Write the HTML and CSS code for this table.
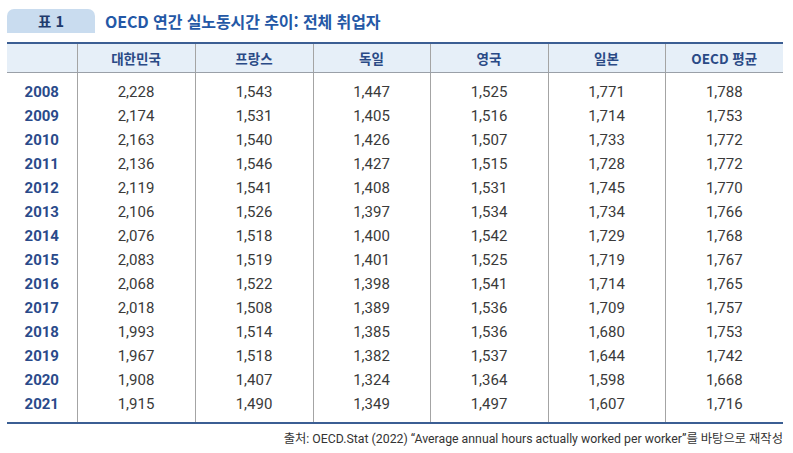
FILE: index.html
```html
<!DOCTYPE html>
<html lang="ko">
<head>
<meta charset="utf-8">
<title>표 1</title>
<link rel="stylesheet" href="styles.css">
</head>
<body>
<div class="page">
  <div class="caption">
    <div class="tab">표 1</div>
    <div class="title">OECD 연간 실노동시간 추이: 전체 취업자</div>
  </div>
  <table class="data">
    <colgroup>
      <col class="c-year"><col class="c-a"><col class="c-a"><col class="c-b"><col class="c-a"><col class="c-b"><col class="c-a">
    </colgroup>
    <thead>
      <tr><th></th><th>대한민국</th><th>프랑스</th><th>독일</th><th>영국</th><th>일본</th><th>OECD 평균</th></tr>
    </thead>
    <tbody>
      <tr class="first"><td class="yr">2008</td><td>2,228</td><td>1,543</td><td>1,447</td><td>1,525</td><td>1,771</td><td>1,788</td></tr>
      <tr><td class="yr">2009</td><td>2,174</td><td>1,531</td><td>1,405</td><td>1,516</td><td>1,714</td><td>1,753</td></tr>
      <tr><td class="yr">2010</td><td>2,163</td><td>1,540</td><td>1,426</td><td>1,507</td><td>1,733</td><td>1,772</td></tr>
      <tr><td class="yr">2011</td><td>2,136</td><td>1,546</td><td>1,427</td><td>1,515</td><td>1,728</td><td>1,772</td></tr>
      <tr><td class="yr">2012</td><td>2,119</td><td>1,541</td><td>1,408</td><td>1,531</td><td>1,745</td><td>1,770</td></tr>
      <tr><td class="yr">2013</td><td>2,106</td><td>1,526</td><td>1,397</td><td>1,534</td><td>1,734</td><td>1,766</td></tr>
      <tr><td class="yr">2014</td><td>2,076</td><td>1,518</td><td>1,400</td><td>1,542</td><td>1,729</td><td>1,768</td></tr>
      <tr><td class="yr">2015</td><td>2,083</td><td>1,519</td><td>1,401</td><td>1,525</td><td>1,719</td><td>1,767</td></tr>
      <tr><td class="yr">2016</td><td>2,068</td><td>1,522</td><td>1,398</td><td>1,541</td><td>1,714</td><td>1,765</td></tr>
      <tr><td class="yr">2017</td><td>2,018</td><td>1,508</td><td>1,389</td><td>1,536</td><td>1,709</td><td>1,757</td></tr>
      <tr><td class="yr">2018</td><td>1,993</td><td>1,514</td><td>1,385</td><td>1,536</td><td>1,680</td><td>1,753</td></tr>
      <tr><td class="yr">2019</td><td>1,967</td><td>1,518</td><td>1,382</td><td>1,537</td><td>1,644</td><td>1,742</td></tr>
      <tr><td class="yr">2020</td><td>1,908</td><td>1,407</td><td>1,324</td><td>1,364</td><td>1,598</td><td>1,668</td></tr>
      <tr class="last"><td class="yr">2021</td><td>1,915</td><td>1,490</td><td>1,349</td><td>1,497</td><td>1,607</td><td>1,716</td></tr>
    </tbody>
  </table>
  <p class="source">출처: OECD.Stat (2022) “Average annual hours actually worked per worker”를 바탕으로 재작성</p>
</div>
</body>
</html>
```
FILE: styles.css
```css
html, body {
  margin: 0;
  padding: 0;
  background: #ffffff;
}
body {
  font-family: Roboto, "Noto Sans CJK KR", "Liberation Sans", sans-serif;
  color: #333333;
}
.page {
  width: 776px;
  padding: 9px 0 0 7px;
}
.caption {
  display: flex;
  align-items: center;
  height: 24px;
}
.tab {
  width: 88px;
  height: 24px;
  line-height: 24px;
  background: #c9dcef;
  border-radius: 7px 7px 0 0;
  text-align: center;
  color: #1f3b6c;
  font-family: "Noto Sans CJK KR", sans-serif;
  font-weight: 700;
  font-size: 14.5px;
}
.title {
  margin-left: 10px;
  color: #2458a6;
  font-family: "Noto Sans CJK KR", sans-serif;
  font-weight: 700;
  font-size: 16px;
  letter-spacing: -0.1px;
}
.data {
  margin-top: 9px;
  width: 776px;
  border-collapse: collapse;
  table-layout: fixed;
  border-top: 2px solid #3b5e93;
  border-bottom: 2px solid #3b5e93;
}
.c-year { width: 70px; }
.c-a { width: 118px; }
.c-b { width: 117px; }
.data th {
  height: 28px;
  padding: 0;
  background: #e6eff8;
  color: #2a4a86;
  font-family: "Noto Sans CJK KR", sans-serif;
  font-weight: 700;
  font-size: 13.5px;
  border-bottom: 1px solid #9aa0a8;
  border-left: 1px solid #a4a4a4;
  text-align: center;
}
.data th:first-child,
.data td:first-child {
  border-left: none;
}
.data td {
  height: 24px;
  padding: 0;
  text-align: center;
  font-size: 15px;
  color: #3a3a3a;
  border-left: 1px solid #a4a4a4;
}
.data td.yr {
  color: #2a4a8a;
  font-weight: 700;
}
.data tr.first td {
  padding-top: 7px;
}
.data tr.last td {
  padding-bottom: 6px;
}
.source {
  margin: 5px 0 0 0;
  text-align: right;
  font-size: 12.3px;
  color: #333333;
  font-family: Roboto, "Noto Sans CJK KR", sans-serif;
}
```
